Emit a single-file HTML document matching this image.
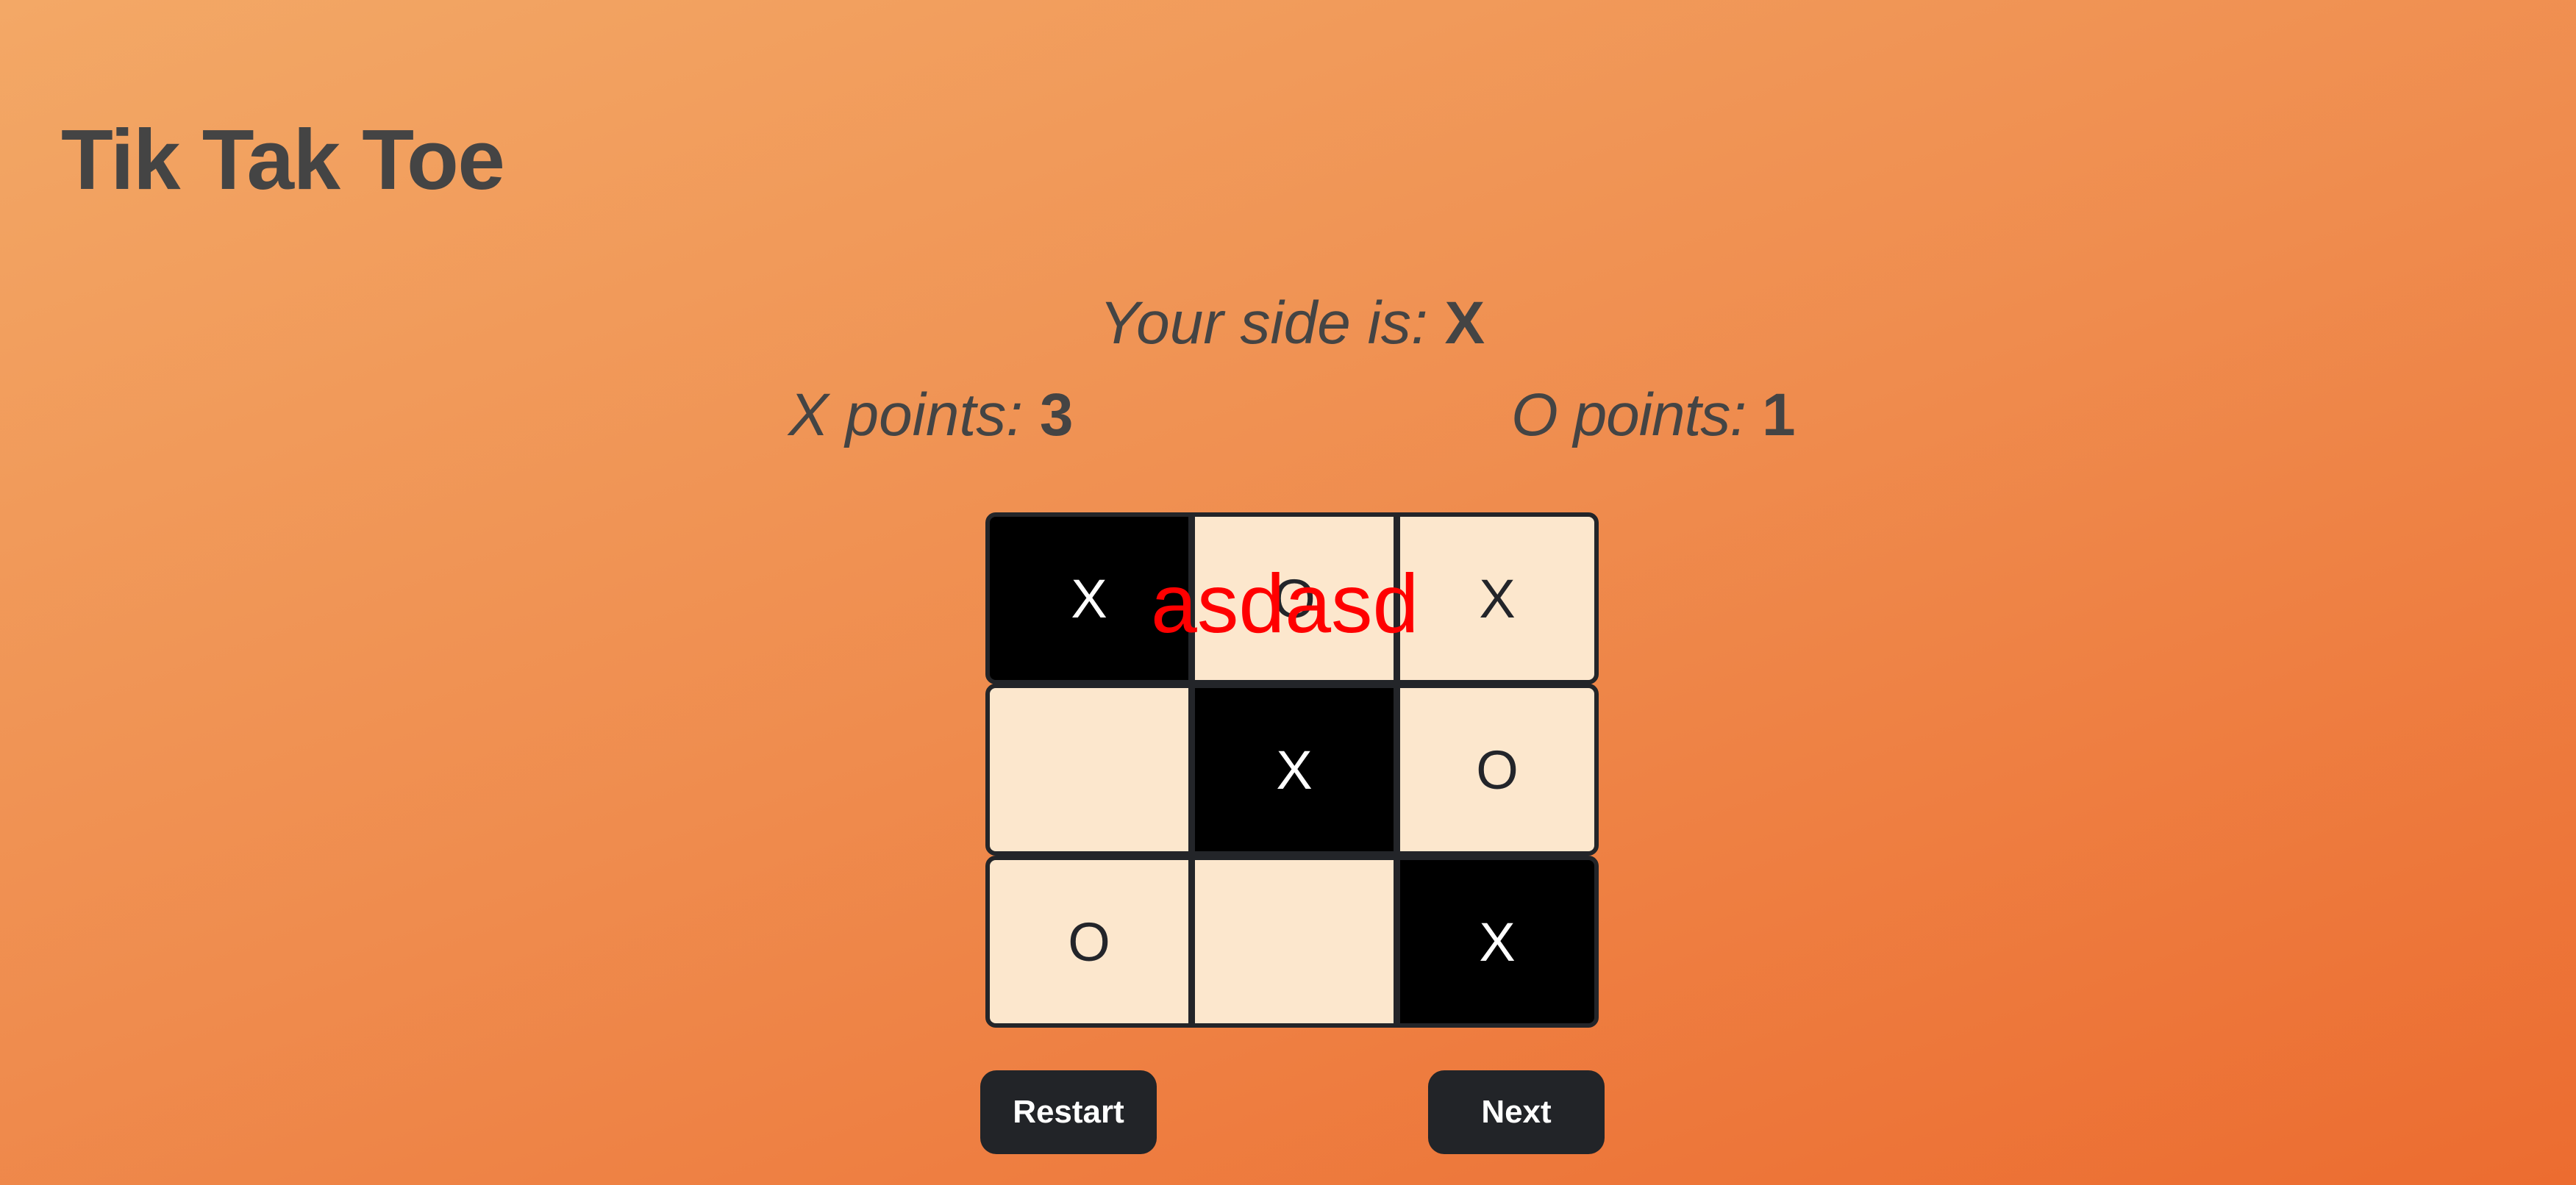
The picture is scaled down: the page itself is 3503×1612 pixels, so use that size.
<!DOCTYPE html>
<html><head><meta charset="utf-8"><style>
*{margin:0;padding:0;box-sizing:border-box}
body{width:3503px;height:1612px;overflow:hidden;background:linear-gradient(160deg,#f3a866 0%,#ef8c4e 50%,#ec6c30 100%);font-family:"Liberation Sans",sans-serif;color:#444;position:relative}
.abs{position:absolute;white-space:nowrap}
h1{position:absolute;left:83px;top:150px;font-size:116px;font-weight:bold;color:#444;letter-spacing:-1.5px}
.it{font-style:italic;font-size:82px}
.row{position:absolute;left:1340px;width:834px;height:234px;border:6px solid #232529;border-radius:14px;overflow:hidden;display:flex;background:#232529}
.c{width:270px;height:100%;background:#fce7cd;display:flex;align-items:center;justify-content:center;font-size:74px;color:#23252a;margin-right:9px}
.c:last-child{margin-right:0;flex:1}
.b{background:#000;color:#fff}
.btn{position:absolute;top:1456px;width:240px;height:114px;background:#222428;border-radius:22px;color:#fff;font-weight:bold;font-size:44px;display:flex;align-items:center;justify-content:center}
</style></head><body>
<h1>Tik Tak Toe</h1>
<div class="abs it" style="left:1495px;top:393px">Your side is: <b style="font-style:normal">X</b></div>
<div class="abs it" style="left:1072px;top:518px">X points: <b style="font-style:normal">3</b></div>
<div class="abs it" style="left:2055px;top:518px;letter-spacing:-1px">O points: <b style="font-style:normal">1</b></div>
<div class="abs" style="left:1565px;top:756px;font-size:113px;color:#f00;z-index:2">asdasd</div>
<div class="row" style="top:697px"><div class="c b">X</div><div class="c">O</div><div class="c">X</div></div>
<div class="row" style="top:930px"><div class="c"></div><div class="c b">X</div><div class="c">O</div></div>
<div class="row" style="top:1164px"><div class="c">O</div><div class="c"></div><div class="c b">X</div></div>
<div class="btn" style="left:1333px">Restart</div>
<div class="btn" style="left:1942px">Next</div>
</body></html>
